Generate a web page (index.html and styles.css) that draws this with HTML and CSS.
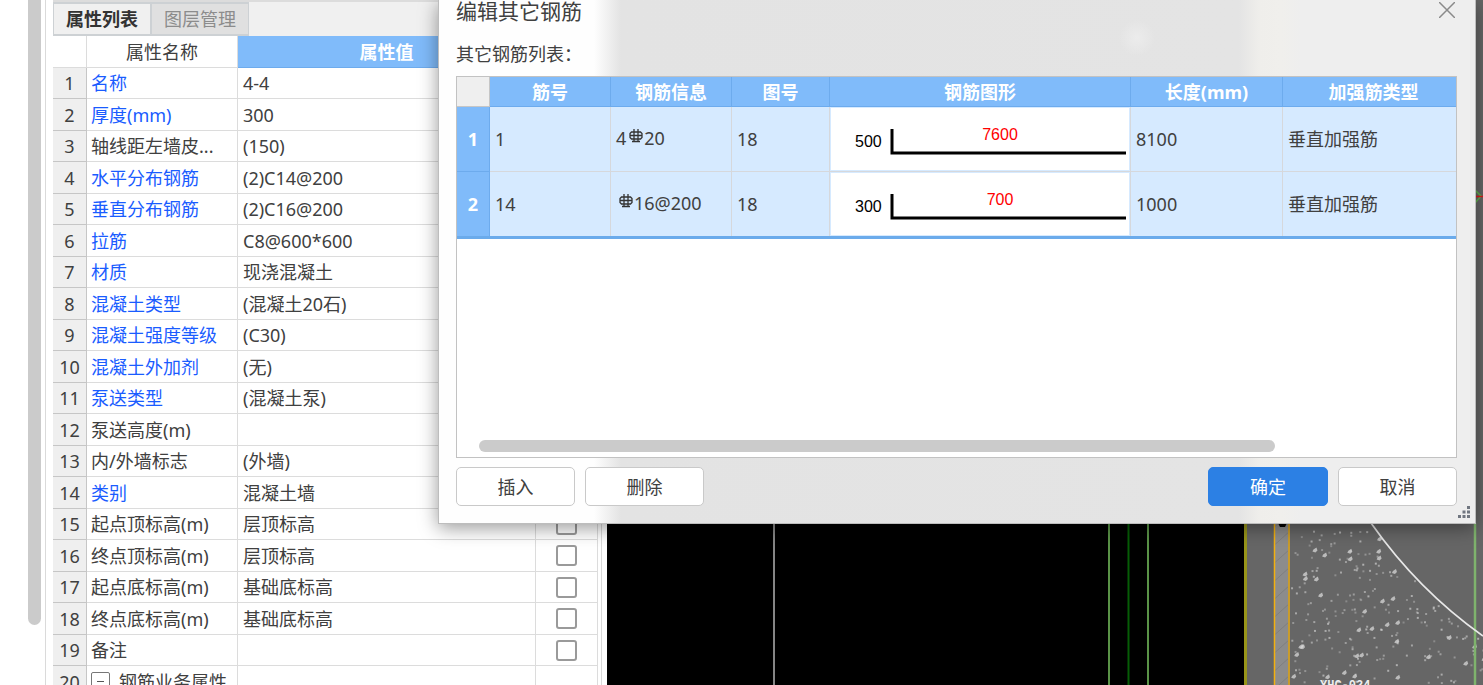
FILE: index.html
```html
<!DOCTYPE html>
<html lang="zh-CN">
<head>
<meta charset="utf-8">
<title>编辑其它钢筋</title>
<link rel="stylesheet" href="styles.css">
</head>
<body>
<svg class="defs" aria-hidden="true">
  <symbol id="rebar" viewBox="0 0 14 14"><path d="M5 0v13M9 0v13M2.500 3h9l1.500 1.500v4l-1.500 1.500h-9L1 8.500v-4zM1 6.500h12M3 12.500h8" fill="none" stroke="#333" stroke-width="1.300"/></symbol>
</svg>
<div class="app">
  <aside class="gutter"><div class="gutter-thumb"></div></aside>
  <section class="panel">
    <div class="tabs" role="tablist">
      <button class="tab tab-active" role="tab" aria-selected="true">属性列表</button>
      <button class="tab" role="tab" aria-selected="false">图层管理</button>
    </div>
    <table class="props">
      <colgroup><col class="c-num"><col class="c-name"><col class="c-value"><col class="c-check"></colgroup>
      <thead><tr><th></th><th>属性名称</th><th class="selected">属性值</th><th></th></tr></thead>
      <tbody>
        <tr><th>1</th><td class="link">名称</td><td>4-4</td><td></td></tr>
        <tr><th>2</th><td class="link">厚度(mm)</td><td>300</td><td></td></tr>
        <tr><th>3</th><td>轴线距左墙皮...</td><td>(150)</td><td></td></tr>
        <tr><th>4</th><td class="link">水平分布钢筋</td><td>(2)C14@200</td><td></td></tr>
        <tr><th>5</th><td class="link">垂直分布钢筋</td><td>(2)C16@200</td><td></td></tr>
        <tr><th>6</th><td class="link">拉筋</td><td>C8@600*600</td><td></td></tr>
        <tr><th>7</th><td class="link">材质</td><td>现浇混凝土</td><td></td></tr>
        <tr><th>8</th><td class="link">混凝土类型</td><td>(混凝土20石)</td><td></td></tr>
        <tr><th>9</th><td class="link">混凝土强度等级</td><td>(C30)</td><td></td></tr>
        <tr><th>10</th><td class="link">混凝土外加剂</td><td>(无)</td><td></td></tr>
        <tr><th>11</th><td class="link">泵送类型</td><td>(混凝土泵)</td><td></td></tr>
        <tr><th>12</th><td>泵送高度(m)</td><td></td><td></td></tr>
        <tr><th>13</th><td>内/外墙标志</td><td>(外墙)</td><td></td></tr>
        <tr><th>14</th><td class="link">类别</td><td>混凝土墙</td><td></td></tr>
        <tr><th>15</th><td>起点顶标高(m)</td><td>层顶标高</td><td class="check"><input type="checkbox" aria-label="起点顶标高(m)"></td></tr>
        <tr><th>16</th><td>终点顶标高(m)</td><td>层顶标高</td><td class="check"><input type="checkbox" aria-label="终点顶标高(m)"></td></tr>
        <tr><th>17</th><td>起点底标高(m)</td><td>基础底标高</td><td class="check"><input type="checkbox" aria-label="起点底标高(m)"></td></tr>
        <tr><th>18</th><td>终点底标高(m)</td><td>基础底标高</td><td class="check"><input type="checkbox" aria-label="终点底标高(m)"></td></tr>
        <tr><th>19</th><td>备注</td><td></td><td class="check"><input type="checkbox" aria-label="备注"></td></tr>
        <tr><th>20</th><td><div class="group"><button class="fold" aria-label="折叠"></button>钢筋业务属性</div></td><td></td><td></td></tr>
      </tbody>
    </table>
  </section>
  <main class="canvas">
    <svg class="drawing" viewBox="607 0 876 685" preserveAspectRatio="xMinYMin slice">
      <defs>
        <pattern id="hatch" width="20" height="18" patternUnits="userSpaceOnUse"><path d="M0 18L20 0" stroke="#7e7e7e"/></pattern>
      </defs>
      <rect x="607" width="876" height="685" fill="#000"/>
      <path d="M774 0V685" stroke="#858585" stroke-width="2"/>
      <path d="M1109 0V685M1148 0V685" stroke="#5a9347" stroke-width="2"/>
      <path d="M1128.500 0V685" stroke="#065d06" stroke-width="2"/>
      <rect x="1246" width="237" height="685" fill="#666"/>
      <path d="M1245.500 0V685" stroke="#98951a" stroke-width="3"/>
      <rect x="1275" width="14" height="685" fill="#8c8c8c"/>
      <rect x="1275" width="14" height="685" fill="url(#hatch)"/>
      <path d="M1274.500 0V685" stroke="#f2b010" stroke-width="1.500"/>
      <path d="M1289 0V685" stroke="#c99c2c" stroke-width="2"/>
      <path d="M1278 523h9l-2 4h-5z" fill="#000"/>
      <g id="aggregate" fill="#d8d8d8"></g>
      <path d="M1475 523V685" stroke="#7fb36d" stroke-width="2.500"/>
      <path d="M1371 523Q1418 590 1483 636" fill="none" stroke="#e8e8e8" stroke-width="1.700"/>
      <path d="M1475 190l6 6-6 7" fill="none" stroke="#61b34f" stroke-width="1.500"/>
      <path d="M1475 196.500h8" stroke="#e01818" stroke-width="1.500"/>
      <text x="1320" y="689" class="cad-label">YHC-024</text>
    </svg>
  </main>
</div>

<div class="dialog" role="dialog" aria-labelledby="dlg-title">
  <header class="dialog-head">
    <h1 id="dlg-title">编辑其它钢筋</h1>
    <button class="close" aria-label="关闭"><svg viewBox="0 0 16 16"><path d="M0 0L16 16M16 0L0 16" stroke="#8a8a8a" stroke-width="1.500"/></svg></button>
  </header>
  <p class="caption">其它钢筋列表：</p>
  <div class="list">
    <table class="bars">
      <colgroup><col class="b-num"><col class="b-id"><col class="b-info"><col class="b-fig"><col class="b-shape"><col class="b-len"><col></colgroup>
      <thead><tr><th class="corner"></th><th>筋号</th><th>钢筋信息</th><th>图号</th><th>钢筋图形</th><th>长度(mm)</th><th class="last">加强筋类型</th></tr></thead>
      <tbody>
        <tr><th>1</th><td>1</td><td><span class="info">4<svg class="rebar"><use href="#rebar"/></svg>20</span></td><td>18</td>
          <td class="shape"><svg viewBox="0 0 298 62"><path d="M61 21V45H295" fill="none" stroke="#000" stroke-width="3"/><text x="24" y="39">500</text><text x="169" y="32" class="red">7600</text></svg></td>
          <td>8100</td><td>垂直加强筋</td></tr>
        <tr><th>2</th><td>14</td><td><span class="info"><svg class="rebar"><use href="#rebar"/></svg>16@200</span></td><td>18</td>
          <td class="shape"><svg viewBox="0 0 298 62"><path d="M61 21V45H295" fill="none" stroke="#000" stroke-width="3"/><text x="24" y="39">300</text><text x="169" y="32" class="red">700</text></svg></td>
          <td>1000</td><td>垂直加强筋</td></tr>
      </tbody>
    </table>
    <div class="scroll"><div class="scroll-thumb"></div></div>
  </div>
  <footer class="actions">
    <button class="btn">插入</button>
    <button class="btn">删除</button>
    <span class="spacer"></span>
    <button class="btn primary">确定</button>
    <button class="btn">取消</button>
  </footer>
  <svg class="grip" viewBox="0 0 12 12" aria-hidden="true"><path d="M9 0h3v3H9zM4.500 4.500h3v3h-3zM9 4.500h3v3H9zM0 9h3v3H0zM4.500 9h3v3h-3zM9 9h3v3H9z" fill="#707680"/></svg>
</div>
<script src="aggregate.js"></script>
</body>
</html>
```

FILE: styles.css
```css
* { box-sizing: border-box; }
body {
  margin: 0;
  height: 100vh;
  overflow: hidden;
  position: relative;
  background: #fff;
  color: #404040;
  font: 18px/24px "Noto Sans", "Noto Sans CJK SC", sans-serif;
}
button { font: inherit; color: inherit; padding: 0; }
.defs { position: absolute; width: 0; height: 0; }

.app { display: flex; height: 100%; }
.gutter { flex: 0 0 42px; padding-left: 28px; }
.gutter-thumb { width: 13px; height: 625px; background: #cbcbcb; border-radius: 0 0 7px 7px; }

.panel {
  flex: 0 0 557px;
  margin: 0 5px 0 3px;
  padding: 0 3px 0 7px;
  border-left: 1px solid #dadada;
  border-right: 1px solid #d8d8d8;
  overflow: hidden;
}
.tabs {
  display: flex;
  height: 36px;
  border-top: 2px solid #dcdcdc;
  background: #f0f0f0;
}
.tab {
  width: 98px;
  border: 2px solid #cdd1d4;
  border-left-width: 1px;
  border-right-width: 1px;
  background: #e0e0e0;
  color: #8c8c8c;
}
.tab-active { background: #f0f0f0; color: #333; font-weight: 700; }

.props { width: 100%; border-collapse: separate; border-spacing: 0; table-layout: fixed; }
.c-num { width: 34px; }
.c-name { width: 151px; }
.c-check { width: 62px; }
.props th, .props td {
  height: 31px;
  padding: 0 0 0 5px;
  border-right: 1px solid #dcdcdc;
  border-bottom: 1px solid #dcdcdc;
  font-weight: 400;
  text-align: left;
  white-space: nowrap;
  overflow: hidden;
}
.props thead th, .props tbody tr:nth-child(even) > * { height: 32px; }
.props tbody td:nth-child(2) { padding-left: 4px; }
.props th { text-align: center; padding: 0; }
.props tbody th { background: #efefef; border-color: #c6c6c6; }
.props .selected { background: #80bbfa; color: #fff; font-weight: 700; border-color: #6dabed; }
.props .link { color: #1a5cff; }
.props .check { padding: 0; text-align: center; }
.check input {
  appearance: none;
  display: block;
  width: 21px;
  height: 21px;
  margin: 0 auto;
  border: 2px solid #9a9a9a;
  border-radius: 3px;
  background: #fff;
}
.group { display: flex; align-items: center; gap: 9px; }
.fold {
  width: 19px;
  height: 19px;
  border: 1px solid #777;
  border-radius: 2px;
  background: linear-gradient(#555, #555) center / 7px 1px no-repeat #fff;
}

.canvas { flex: 1; background: #000; min-width: 0; }
.drawing { display: block; width: 100%; height: 100%; }
.cad-label { font: 700 12px "Liberation Mono", monospace; fill: #eee; }

.dialog {
  position: absolute;
  top: 0;
  left: 438px;
  right: 7px;
  padding: 0 18px 17px 17px;
  border: 1px solid #bdbdbd;
  border-top: 0;
  background:
    radial-gradient(circle at 698px 38px, #ececec, transparent 18px),
    linear-gradient(90deg, #fefefe 155px, #e3e3e3 182px, #e4e4e4 800px, #efeeeb 820px, #f0efec 842px, #eee 862px);
  box-shadow: 0 4px 18px rgba(0, 0, 0, .4);
}
.dialog-head { display: flex; justify-content: space-between; height: 24px; }
.dialog-head h1 { margin: 0; font-size: 21px; font-weight: 400; line-height: 22px; }
.close { width: 18px; height: 20px; border: 0; background: none; }
.close svg { display: block; width: 16px; height: 16px; }
.caption { margin: 18px 0 10px; }

.list {
  display: flex;
  flex-direction: column;
  height: 382px;
  border: 1px solid #c2c2c2;
  background: #fff;
}
.bars { width: 100%; border-collapse: separate; border-spacing: 0; table-layout: fixed; border-bottom: 3px solid #6babeb; }
.b-num { width: 33px; }
.b-id, .b-info { width: 121px; }
.b-fig { width: 98px; }
.b-shape { width: 301px; }
.b-len { width: 152px; }
.bars th {
  padding: 0;
  height: 30px;
  color: #fff;
  background: #80bbfa;
  border-right: 1px solid #6dabed;
  border-bottom: 1px solid #6dabed;
}
.bars .corner { background: #efefef; border-color: #c6c6c6; }
.bars .last { padding-left: 8px; }
.bars td {
  height: 65px;
  padding: 0 5px;
  background: #d6eaff;
  border-right: 1px solid #d6d8dc;
  border-bottom: 1px solid #d6d8dc;
}
.bars tr > :last-child { border-right: 0; }
.bars tbody tr:last-child > * { border-bottom: 0; height: 64px; }
.bars .shape { padding: 1px; }
.shape svg { display: block; width: 100%; height: 62px; background: #fff; font: 16px "Liberation Sans", sans-serif; }
.shape .red { fill: #f00; text-anchor: middle; }
.info { display: flex; padding-bottom: 3px; }
.rebar { width: 14px; height: 14px; margin: 3px 1px 0 3px; }

.scroll { margin-top: auto; padding: 0 181px 5px 22px; }
.scroll-thumb { height: 12px; border-radius: 6px; background: #cbcbcb; }

.actions { display: flex; gap: 10px; padding-top: 9px; }
.spacer { flex: 1; }
.btn {
  width: 119px;
  height: 39px;
  border: 1px solid #c9c9c9;
  border-radius: 5px;
  background: #fff;
}
.primary { width: 120px; border-color: #2c80e4; background: #2c80e4; color: #fff; }
.grip { position: absolute; right: 5px; bottom: 5px; width: 12px; height: 12px; }
```

FILE: aggregate.js
```js
// Scatters concrete aggregate flecks below the wall arc.
const group = document.getElementById("aggregate");
let seed = 41;
const rand = () => (seed = (seed * 16807) % 2147483647) / 2147483647;
const arcY = x => (x < 1372 ? 523 : 523 + (x - 1372) * 1.3 - (x - 1372) ** 2 * 0.0026);

for (let i = 0; i < 330; i++) {
  const x = 1291 + rand() * 192;
  const y = 524 + rand() * 161;
  const big = rand() < 0.16;
  const tone = 0.3 + rand() * 0.35;
  if (y < arcY(x) + 6) continue;
  const fleck = document.createElementNS("http://www.w3.org/2000/svg", "path");
  fleck.setAttribute("d", big
    ? `M${x} ${y}l3 -2 1 3 -2 2 -3 -1z`
    : `M${x} ${y}h2v2h-2z`);
  fleck.setAttribute("opacity", big ? 0.75 : tone);
  group.appendChild(fleck);
}
```
